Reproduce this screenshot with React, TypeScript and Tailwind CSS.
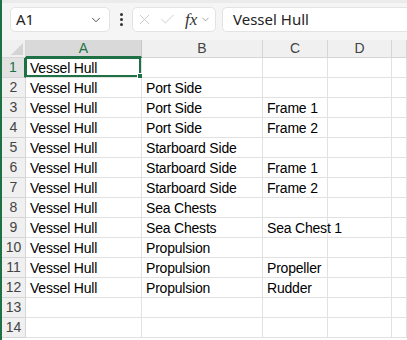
import { ChevronDown, X, Check } from "lucide-react";

const rows: [string, string, string][] = [
  ["Vessel Hull", "", ""],
  ["Vessel Hull", "Port Side", ""],
  ["Vessel Hull", "Port Side", "Frame 1"],
  ["Vessel Hull", "Port Side", "Frame 2"],
  ["Vessel Hull", "Starboard Side", ""],
  ["Vessel Hull", "Starboard Side", "Frame 1"],
  ["Vessel Hull", "Starboard Side", "Frame 2"],
  ["Vessel Hull", "Sea Chests", ""],
  ["Vessel Hull", "Sea Chests", "Sea Chest 1"],
  ["Vessel Hull", "Propulsion", ""],
  ["Vessel Hull", "Propulsion", "Propeller"],
  ["Vessel Hull", "Propulsion", "Rudder"],
  ["", "", ""],
  ["", "", ""],
];

const cellFont = { fontFamily: '"Liberation Sans", Arial, sans-serif' };
const uiFont = { fontFamily: '"Noto Sans", "Open Sans", sans-serif' };

const App = () => {
  return (
    <div className="w-[407px] h-[340px] overflow-hidden bg-white border-l-2 border-[#1e7145] text-[#1f1f1f]">
      {/* formula bar */}
      <div className="h-[40px] bg-[#f5f5f5] border-t-[3px] border-[#ebebeb] flex items-start pt-[4px]">
        <div className="ml-[8px] w-[100px] h-[25px] bg-white border border-[#e3e3e3] rounded-[5px] flex items-center pl-[5px] pr-[6px]">
          <span className="text-[15px] flex-1 text-[#242424]" style={uiFont}>A1</span>
          <ChevronDown size={14} strokeWidth={1.6} className="text-[#444]" />
        </div>
        <div className="w-[22px] h-[25px] flex flex-col items-center justify-center gap-[2px]">
          <span className="w-[3px] h-[3px] rounded-full bg-[#333]" />
          <span className="w-[3px] h-[3px] rounded-full bg-[#333]" />
          <span className="w-[3px] h-[3px] rounded-full bg-[#333]" />
        </div>
        <div className="w-[84px] h-[25px] bg-white border border-[#e3e3e3] rounded-[5px] flex items-center pl-[3px]">
          <X size={17} strokeWidth={1.2} className="text-[#c4c4c4]" />
          <Check size={17} strokeWidth={1.2} className="text-[#c4c4c4] ml-[6px]" />
          <span
            className="ml-[9px] text-[17px] italic text-[#333] leading-none"
            style={{ fontFamily: '"Liberation Serif", serif' }}
          >
            fx
          </span>
          <ChevronDown size={11} strokeWidth={1.5} className="text-[#777] ml-[3px]" />
        </div>
        <div className="ml-[6px] flex-1 h-[25px] bg-white border border-[#e3e3e3] border-r-0 rounded-l-[5px] flex items-center pl-[10px]">
          <span className="text-[15px] text-[#242424]" style={uiFont}>Vessel Hull</span>
        </div>
      </div>

      {/* sheet grid */}
      <div className="grid grid-cols-[24px_116px_121px_65px_64px_1fr]" style={cellFont}>
        {/* corner */}
        <div className="h-[18px] bg-[#f0f0f0] border-r border-b border-[#d5d5d5] flex items-end justify-end p-[2px]">
          <svg width="12" height="12" viewBox="0 0 12 12">
            <polygon points="12,0 12,12 0,12" fill="#d4d4d4" />
          </svg>
        </div>
        {["A", "B", "C", "D", ""].map((c, i) => (
          <div
            key={c + i}
            className={
              i === 0
                ? "h-[18px] bg-[#d9d9d9] border-r border-[#c8c8c8] border-b-2 border-b-[#1e7145] text-[#1e7145] text-[14px] flex items-center justify-center"
                : "h-[18px] bg-[#f0f0f0] border-r border-b border-[#d5d5d5] text-[#444] text-[14px] flex items-center justify-center"
            }
          >
            {c}
          </div>
        ))}

        {rows.map((r, ri) => (
          <div key={ri} className="contents">
            <div
              className={
                ri === 0
                  ? "h-[20px] bg-[#e2e2e2] border-r-2 border-r-[#1e7145] border-b border-[#d5d5d5] text-[#1e7145] text-[14px] flex items-center justify-center"
                  : "h-[20px] bg-[#f0f0f0] border-r border-b border-[#d5d5d5] text-[#444] text-[14px] flex items-center justify-center"
              }
            >
              {ri + 1}
            </div>
            {[r[0], r[1], r[2], "", ""].map((v, ci) => (
              <div
                key={ci}
                className="relative h-[20px] border-r border-b border-[#e1e1e1] pl-[4px] pt-[1px] text-[14px] tracking-[-0.2px] text-black whitespace-nowrap flex items-center"
              >
                {v}
                {ri === 0 && ci === 0 && (
                  <div className="absolute -left-[1px] -top-[1px] right-0 bottom-0 border-2 border-[#1e7145] pointer-events-none">
                    <span className="absolute -right-[4px] -bottom-[4px] w-[6px] h-[6px] bg-[#1e7145] border border-white" />
                  </div>
                )}
              </div>
            ))}
          </div>
        ))}
      </div>
    </div>
  );
};

export default App;
